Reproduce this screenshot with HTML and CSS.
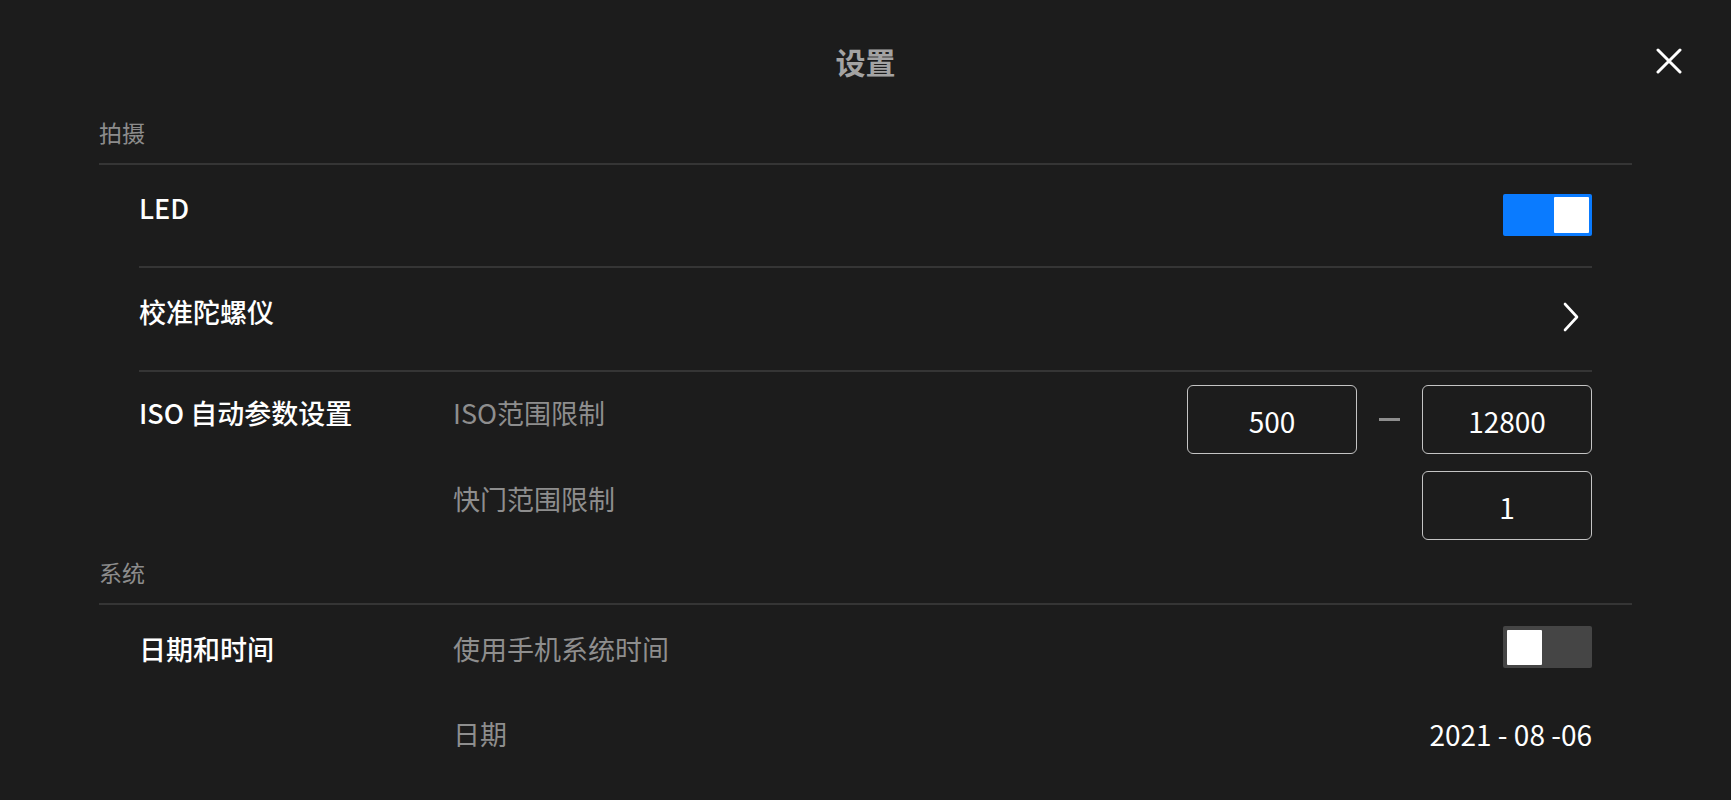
FILE: index.html
```html
<!DOCTYPE html>
<html lang="zh-CN">
<head>
  <meta charset="UTF-8">
  <meta name="viewport" content="width=device-width, initial-scale=1.0">
  <title>设置</title>
  <link rel="stylesheet" href="styles.css">
</head>
<body>
  <div class="settings">
    <header class="top-bar">
      <h1 class="title">设置</h1>
      <button class="close-btn" aria-label="关闭">
        <svg width="26" height="26" viewBox="0 0 26 26">
          <path d="M2 2 L24 24 M24 2 L2 24" stroke="#fff" stroke-width="3" stroke-linecap="round" fill="none"/>
        </svg>
      </button>
    </header>

    <!-- 拍摄 -->
    <section class="group">
      <h2 class="group-title">拍摄</h2>

      <div class="row row-led">
        <div class="row-title">LED</div>
        <div class="switch on"><span class="knob"></span></div>
      </div>

      <div class="row row-gyro">
        <div class="row-title">校准陀螺仪</div>
        <div class="chevron">
          <svg width="18" height="30" viewBox="0 0 18 30">
            <path d="M3 2 L15 15 L3 28" stroke="#fff" stroke-width="2.6" stroke-linecap="round" stroke-linejoin="round" fill="none"/>
          </svg>
        </div>
      </div>

      <div class="row row-iso">
        <div class="row-title">ISO 自动参数设置</div>
        <div class="row-body">
          <div class="item">
            <span class="item-label">ISO范围限制</span>
            <div class="range">
              <div class="field">500</div>
              <span class="dash"></span>
              <div class="field">12800</div>
            </div>
          </div>
          <div class="item">
            <span class="item-label">快门范围限制</span>
            <div class="field">1</div>
          </div>
        </div>
      </div>
    </section>

    <!-- 系统 -->
    <section class="group">
      <h2 class="group-title">系统</h2>

      <div class="row row-date">
        <div class="row-title">日期和时间</div>
        <div class="row-body">
          <div class="item item-switch">
            <span class="item-label">使用手机系统时间</span>
            <div class="switch"><span class="knob"></span></div>
          </div>
          <div class="item item-value">
            <span class="item-label">日期</span>
            <span class="value">2021 - 08 -06</span>
          </div>
        </div>
      </div>
    </section>
  </div>
</body>
</html>
```

FILE: styles.css
```css
body {
  margin: 0;
  height: 800px;
  overflow: hidden;
  background-color: #1c1c1c;
  font-family: "Noto Sans CJK SC", "Noto Sans", sans-serif;
  color: #fff;
}
.settings {
  width: 1731px;
}
.top-bar {
  position: relative;
  height: 117px;
  padding-top: 46px;
  box-sizing: border-box;
  text-align: center;
}
.title {
  margin: 0;
  font-size: 30px;
  line-height: 30px;
  font-weight: bold;
  color: #a3a3a3;
}
.close-btn {
  position: absolute;
  top: 48px;
  right: 49px;
  width: 26px;
  height: 26px;
  padding: 0;
  border: none;
  background: none;
  cursor: pointer;
}
.close-btn svg {
  display: block;
}
.group {
  margin: 0 99px;
}
.group-title {
  margin: 0;
  padding-bottom: 16px;
  border-bottom: 2px solid #353535;
  font-size: 23px;
  line-height: 30px;
  font-weight: normal;
  color: #8c8c8c;
}
.row {
  display: flex;
  align-items: flex-start;
  margin: 0 40px;
}
.row + .row {
  border-top: 2px solid #353535;
}
.row-title {
  width: 314px;
  flex-shrink: 0;
  font-size: 27px;
  line-height: 30px;
  font-weight: 500;
}
.row-led, .row-gyro {
  justify-content: space-between;
}
.row-led .row-title, .row-gyro .row-title {
  flex: 1;
}
.row-led {
  padding: 29px 0 30px;
}
.row-led .row-title {
  margin-top: -1px;
}
.row-gyro {
  padding: 28px 0 32px;
}
.row-gyro .row-title {
  margin-top: 1px;
}
.chevron {
  height: 42px;
  display: flex;
  align-items: center;
  margin-right: 12px;
}
.switch {
  width: 89px;
  height: 42px;
  padding: 3px;
  box-sizing: border-box;
  display: flex;
  background-color: #454545;
  border-radius: 2px;
}
.switch .knob {
  width: 35px;
  height: 35px;
  margin: 1px 0 0 1px;
  background: #fff;
  border-radius: 1px;
}
.switch.on {
  justify-content: flex-end;
  background-color: #0a7bff;
}
.switch.on .knob {
  height: 36px;
  margin: 0;
}
.row-body {
  flex: 1;
  display: flex;
  flex-direction: column;
}
.item {
  display: flex;
  justify-content: space-between;
  align-items: flex-start;
}
.item-label {
  font-size: 27px;
  line-height: 30px;
  color: #8e8e8e;
}
.row-iso {
  padding: 13px 0 17px;
}
.row-iso .row-title, .row-iso .item-label {
  padding-top: 13px;
}
.row-iso .item + .item {
  margin-top: 17px;
}
.range {
  display: flex;
  align-items: center;
  gap: 22px;
}
.dash {
  width: 21px;
  height: 3px;
  background-color: #8e8e8e;
}
.field {
  width: 170px;
  height: 69px;
  box-sizing: border-box;
  border: 1.5px solid #c4c4c4;
  border-radius: 6px;
  display: flex;
  align-items: center;
  justify-content: center;
  font-size: 28px;
  padding-top: 3px;
}
.row-date {
  padding-top: 21px;
}
.row-date .row-title, .item-switch .item-label {
  padding-top: 8px;
}
.item-value {
  margin-top: 51px;
}
.value {
  font-size: 28px;
  line-height: 30px;
}
```
